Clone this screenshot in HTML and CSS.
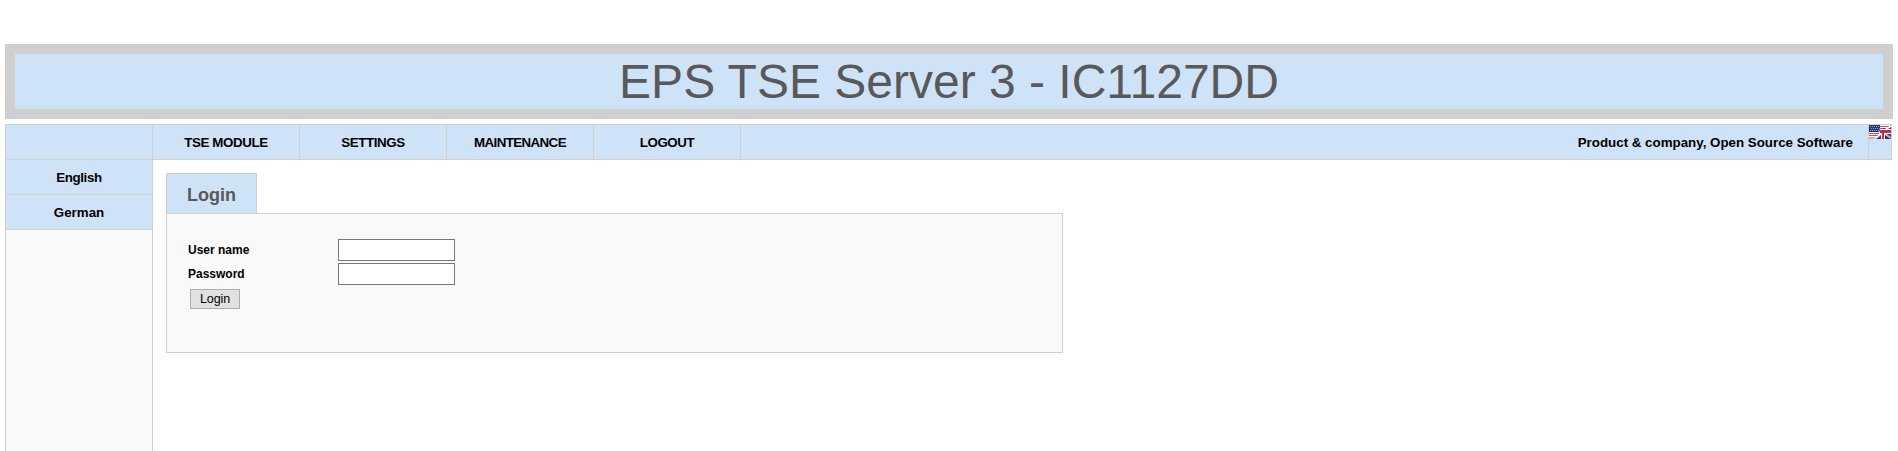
FILE: index.html
```html
<!DOCTYPE html>
<html lang="en">
<head>
<meta charset="utf-8">
<title>EPS TSE Server 3</title>
<link rel="stylesheet" href="styles.css">
</head>
<body>
<header class="banner"><h1 class="banner-title">EPS TSE Server 3 - IC1127DD</h1></header>
<nav class="menu">
  <div class="menu-item"></div>
  <div class="menu-item"><span class="tight">TSE MODULE</span></div>
  <div class="menu-item"><span class="tight">SETTINGS</span></div>
  <div class="menu-item"><span class="tighter">MAINTENANCE</span></div>
  <div class="menu-item"><span class="tight">LOGOUT</span></div>
  <div class="menu-info">Product &amp; company, Open Source Software</div>
  <div class="menu-flag">
    <svg class="flag" viewBox="0 0 22 14" width="22" height="14">
      <path d="M0 0H22V14H0Z" fill="#fff"/>
      <path d="M11 1.5H21M11 3.5H18M0 8.5H12M0 10.5H9M0 13H7" stroke="#d8474f" stroke-width="1"/>
      <path d="M0 0H11V7H0Z" fill="#213a7c"/>
      <path d="M1 1.5H11M2 3.5H11M1 5.5H11" stroke="#8fa3cc" stroke-width="1" stroke-dasharray="1 1"/>
      <path d="M22 0V14H6L13 8L14 3H18Z" fill="#27357f"/>
      <path d="M6 14L14 8M16 5L22 1M15 8L22 13" stroke="#fff" stroke-width="1.8"/>
      <path d="M7 14L13 9.5M17 9L22 13" stroke="#c52c3c" stroke-width=".8"/>
      <path d="M11 4H22V9H16V14H12V9H10Z" fill="#fff"/>
      <path d="M11 5H22V8H15V14H13V8H11Z" fill="#c52c3c"/>
    </svg>
  </div>
</nav>
<div class="body">
  <aside class="side">
    <div class="side-item"><span class="tight">English</span></div>
    <div class="side-item">German</div>
  </aside>
  <main class="content">
    <div class="tab">Login</div>
    <form class="panel">
      <label class="row"><span class="label">User name</span><input class="field" type="text"></label>
      <label class="row"><span class="label">Password</span><input class="field" type="password"></label>
      <button class="submit" type="button">Login</button>
    </form>
  </main>
</div>
</body>
</html>
```
FILE: styles.css
```css
* { box-sizing: border-box; }
html, body { height: 100%; overflow: hidden; }
body {
  margin: 0;
  padding: 44px 5px 0;
  display: flex;
  flex-direction: column;
  background: #fff;
  color: #000;
  font-family: "Liberation Sans", Arial, sans-serif;
  font-size: 13.33px;
  font-weight: bold;
  white-space: nowrap;
}
.banner {
  flex: none;
  height: 75px;
  border: 10px solid #cfcfcf;
  background: #cfe3f8;
  display: flex;
  align-items: center;
  justify-content: center;
}
.banner-title { margin: 0; font-size: 48px; font-weight: normal; line-height: 55px; color: #595959; }
.menu {
  flex: none;
  display: flex;
  height: 36px;
  width: 1887px;
  margin-top: 5px;
  border: 1px solid #cfcfcf;
  background: #cfe3f8;
}
.menu-item {
  width: 147px;
  border-right: 1px solid #cfcfcf;
  display: flex;
  align-items: center;
  justify-content: center;
}
.tight { letter-spacing: -0.4px; }
.tighter { letter-spacing: -0.6px; }
.menu-info { flex: 1; display: flex; align-items: center; justify-content: flex-end; padding-right: 15px; }
.menu-flag { width: 23px; border-left: 1px solid #cfcfcf; }
.flag { display: block; }
.body { flex: 1; display: flex; min-height: 0; }
.side {
  width: 148px;
  border: 1px solid #cfcfcf;
  border-width: 0 1px;
  background: #f9f9f9;
}
.side-item {
  height: 35px;
  border-bottom: 1px solid #cfcfcf;
  background: #cfe3f8;
  display: flex;
  align-items: center;
  justify-content: center;
}
.content { padding: 13px 0 0 13px; }
.tab {
  width: 91px;
  height: 40px;
  border: 1px solid #cfcfcf;
  border-bottom: 0;
  background: #cfe3f8;
  color: #595959;
  font-size: 18px;
  display: flex;
  align-items: center;
  justify-content: center;
  padding-top: 3px;
}
.panel {
  width: 897px;
  height: 140px;
  border: 1px solid #cfcfcf;
  background: #f9f9f9;
  padding: 25px 0 0 21px;
  font-size: 12px;
}
.row { display: flex; align-items: center; height: 22px; margin-bottom: 2px; }
.label { width: 150px; }
.field {
  width: 117px;
  height: 22px;
  margin: 0;
  padding: 1px 2px;
  border: 1px solid #767676;
  background: #fff;
}
.submit {
  display: block;
  width: 50px;
  height: 20px;
  margin: 4px 0 0 2px;
  padding: 1px 0 0;
  border: 1px solid #adadad;
  background: #e1e1e1;
  color: #000;
  font: 12.5px/17px "Liberation Sans", Arial, sans-serif;
  letter-spacing: -0.1px;
}
```
